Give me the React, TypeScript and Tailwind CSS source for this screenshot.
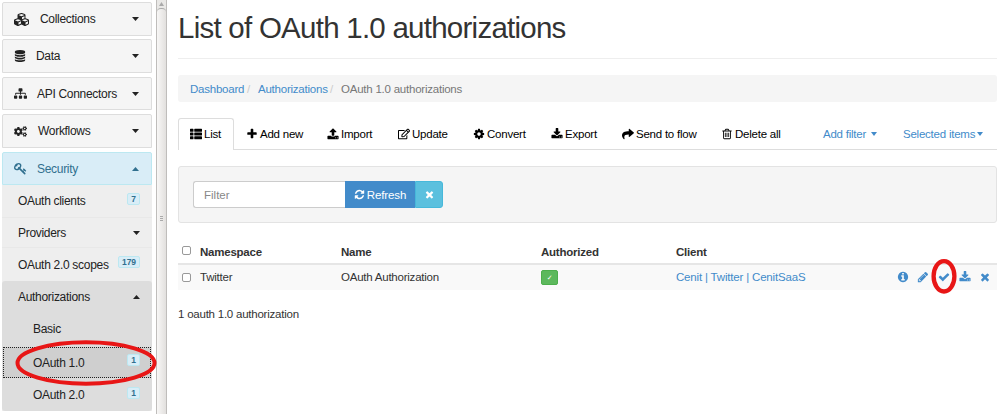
import React from "react";
import { FaCubes, FaSitemap, FaCogs, FaThList, FaRegEdit, FaShare } from "react-icons/fa";

const P = {
  database:
    "M896 768q237 0 443-43t325-127v170q0 69-103 128t-280 93.5-385 34.5-385-34.5-280-93.5-103-128v-170q119 84 325 127t443 43zm0 768q237 0 443-43t325-127v170q0 69-103 128t-280 93.5-385 34.5-385-34.5-280-93.5-103-128v-170q119 84 325 127t443 43zm0-384q237 0 443-43t325-127v170q0 69-103 128t-280 93.5-385 34.5-385-34.5-280-93.5-103-128v-170q119 84 325 127t443 43zm0-1152q208 0 385 34.5t280 93.5 103 128v128q0 69-103 128t-280 93.5-385 34.5-385-34.5-280-93.5-103-128v-128q0-69 103-128t280-93.5 385-34.5z",
  key: "M832 512q0-80-56-136t-136-56-136 56-56 136q0 42 19 83-41-19-83-19-80 0-136 56t-56 136 56 136 136 56 136-56 56-136q0-42-19-83 41 19 83 19 80 0 136-56t56-136zm851 704q0 17-49 66t-66 49q-9 0-28.5-16t-36.5-33-38.5-40-24.5-26l-96 96 220 220q28 28 28 68 0 42-39 81t-81 39q-40 0-68-28l-671-671q-176 131-365 131-163 0-265.5-102.5t-102.5-265.5q0-160 95-313t248-248 313-95q163 0 265.5 102.5t102.5 265.5q0 189-131 365l355 355 96-96q-3-3-26-24.5t-40-38.5-33-36.5-16-28.5q0-17 49-66t66-49q13 0 23 10 6 6 46 44.5t82 79.5 86.5 86 73 78 28.5 41z",
  times:
    "M1490 1322q0 40-28 68l-136 136q-28 28-68 28t-68-28l-294-294-294 294q-28 28-68 28t-68-28l-136-136q-28-28-28-68t28-68l294-294-294-294q-28-28-28-68t28-68l136-136q28-28 68-28t68 28l294 294 294-294q28-28 68-28t68 28l136 136q28 28 28 68t-28 68l-294 294 294 294q28 28 28 68z",
  check:
    "M1671 566q0 40-28 68l-724 724-136 136q-28 28-68 28t-68-28l-136-136-362-362q-28-28-28-68t28-68l136-136q28-28 68-28t68 28l294 295 656-657q28-28 68-28t68 28l136 136q28 28 28 68z",
  plus: "M1600 736v192q0 40-28 68t-68 28h-416v416q0 40-28 68t-68 28h-192q-40 0-68-28t-28-68v-416h-416q-40 0-68-28t-28-68v-192q0-40 28-68t68-28h416v-416q0-40 28-68t68-28h192q40 0 68 28t28 68v416h416q40 0 68 28t28 68z",
  refresh:
    "M1639 1056q0 5-1 7-64 268-268 434.5t-478 166.5q-146 0-282.5-55t-243.5-157l-129 129q-19 19-45 19t-45-19-19-45v-448q0-26 19-45t45-19h448q26 0 45 19t19 45-19 45l-137 137q71 66 161 102t187 36q134 0 250-65t186-179q11-17 53-117 8-23 30-23h192q13 0 22.5 9.5t9.5 22.5zm25-800v448q0 26-19 45t-45 19h-448q-26 0-45-19t-19-45 19-45l138-138q-148-137-349-137-134 0-250 65t-186 179q-11 17-53 117-8 23-30 23h-199q-13 0-22.5-9.5t-9.5-22.5v-7q65-268 270-434.5t480-166.5q146 0 284 55.5t245 156.5l130-129q19-19 45-19t45 19 19 45z",
  pencil:
    "M491 1536l91-91-235-235-91 91v107h128v128h107zm523-928q0-22-22-22-10 0-17 7l-542 542q-7 7-7 17 0 22 22 22 10 0 17-7l542-542q7-7 7-17zm-54-192l416 416-832 832h-416v-416zm683 96q0 53-37 90l-166 166-416-416 166-165q36-38 90-38 53 0 91 38l235 234q37 39 37 91z",
  info: "M1152 1376v-160q0-14-9-23t-23-9h-96v-512q0-14-9-23t-23-9h-320q-14 0-23 9t-9 23v160q0 14 9 23t23 9h96v320h-96q-14 0-23 9t-9 23v160q0 14 9 23t23 9h448q14 0 23-9t9-23zm-128-896v-160q0-14-9-23t-23-9h-192q-14 0-23 9t-9 23v160q0 14 9 23t23 9h192q14 0 23-9t9-23zm640 416q0 209-103 385.5t-279.5 279.5-385.5 103-385.5-103-279.5-279.5-103-385.5 103-385.5 279.5-279.5 385.5-103 385.5 103 279.5 279.5 103 385.5z",
  trash:
    "M704 736v576q0 14-9 23t-23 9h-64q-14 0-23-9t-9-23v-576q0-14 9-23t23-9h64q14 0 23 9t9 23zm256 0v576q0 14-9 23t-23 9h-64q-14 0-23-9t-9-23v-576q0-14 9-23t23-9h64q14 0 23 9t9 23zm256 0v576q0 14-9 23t-23 9h-64q-14 0-23-9t-9-23v-576q0-14 9-23t23-9h64q14 0 23 9t9 23zm128 724v-948h-896v948q0 22 7 40.5t14.5 27 10.5 8.5h832q3 0 10.5-8.5t14.5-27 7-40.5zm-672-1076h448l-48-117q-7-9-17-11h-317q-10 2-17 11zm928 32v64q0 14-9 23t-23 9h-96v948q0 83-47 143.5t-113 60.5h-832q-66 0-113-58.5t-47-141.5v-952h-96q-14 0-23-9t-9-23v-64q0-14 9-23t23-9h309l70-167q15-37 54-63t79-26h320q40 0 79 26t54 63l70 167h309q14 0 23 9t9 23z",
  download:
    "M1344 1344q0-26-19-45t-45-19-45 19-19 45 19 45 45 19 45-19 19-45zm256 0q0-26-19-45t-45-19-45 19-19 45 19 45 45 19 45-19 19-45zm128-224v320q0 40-28 68t-68 28h-1472q-40 0-68-28t-28-68v-320q0-40 28-68t68-28h465l135 136q58 56 136 56t136-56l136-136h464q40 0 68 28t28 68zm-325-569q17 41-14 70l-448 448q-18 19-45 19t-45-19l-448-448q-31-29-14-70 17-39 59-39h256v-448q0-26 19-45t45-19h256q26 0 45 19t19 45v448h256q42 0 59 39z",
  upload:
    "M1344 1472q0-26-19-45t-45-19-45 19-19 45 19 45 45 19 45-19 19-45zm256 0q0-26-19-45t-45-19-45 19-19 45 19 45 45 19 45-19 19-45zm128-224v320q0 40-28 68t-68 28h-1472q-40 0-68-28t-28-68v-320q0-40 28-68t68-28h427q21 56 70.5 92t110.5 36h256q61 0 110.5-36t70.5-92h427q40 0 68 28t28 68zm-325-648q-17 40-59 40h-256v448q0 26-19 45t-45 19h-256q-26 0-45-19t-19-45v-448h-256q-42 0-59-40-17-39 14-69l448-448q18-19 45-19t45 19l448 448q31 30 14 69z",
  cog: "M1152 896q0-106-75-181t-181-75-181 75-75 181 75 181 181 75 181-75 75-181zm512-109v222q0 12-8 23t-20 13l-185 28q-19 54-39 91 35 50 107 138 10 12 10 25t-9 23q-27 37-99 108t-94 71q-12 0-26-9l-138-108q-44 23-91 38-16 136-29 186-7 28-36 28h-222q-14 0-24.5-8.5t-11.5-21.5l-28-184q-49-16-90-37l-141 107q-10 9-25 9-14 0-25-11-126-114-165-168-7-10-7-23 0-12 8-23 15-21 51-66.5t54-70.5q-27-50-41-99l-183-27q-13-2-21-12.5t-8-23.5v-222q0-12 8-23t19-13l186-28q14-46 39-92-40-57-107-138-10-12-10-24 0-10 9-23 26-36 98.5-107.5t94.5-71.5q13 0 26 10l138 107q44-23 91-38 16-136 29-186 7-28 36-28h222q14 0 24.5 8.5t11.5 21.5l28 184q49 16 90 37l142-107q9-9 24-9 13 0 25 10 129 119 165 170 7 8 7 22 0 12-8 23-15 21-51 66.5t-54 70.5q26 50 41 98l183 28q13 2 21 12.5t8 23.5z",
};

function Icon({ name, className = "size-3" }: { name: keyof typeof P; className?: string }) {
  return (
    <svg viewBox="0 0 1792 1792" fill="currentColor" className={`shrink-0 ${className}`}>
      <path d={P[name]} />
    </svg>
  );
}

function Caret({ up = false, className = "w-[7px]" }: { up?: boolean; className?: string }) {
  return (
    <svg viewBox="0 0 8 4" fill="currentColor" preserveAspectRatio="none" className={`h-1 shrink-0 ${className}`}>
      <path d={up ? "M0 4L4 0L8 4Z" : "M0 0H8L4 4Z"} />
    </svg>
  );
}

function Heading({ icon, gap, label, className }: { icon: React.ReactNode; gap: string; label: string; className: string }) {
  return (
    <div className={`flex shrink-0 items-center rounded-t-[2px] border border-[#dddddd] bg-[#f5f5f5] pr-3 pl-[11px] text-[#222] ${className}`}>
      {icon}
      <span className={`flex-1 ${gap}`}>{label}</span>
      <Caret />
    </div>
  );
}

function Badge({ children }: { children: string }) {
  return (
    <span className="mb-[5px] flex h-3 items-center rounded-[2px] border border-[#bce8f1] bg-[#d9edf7] px-[3px] text-[8.5px] font-bold tracking-[-0.1px] text-[#31708f]">
      {children}
    </span>
  );
}

function Tab({ icon, label, className }: { icon: React.ReactNode; label: string; className: string }) {
  return (
    <div className={`flex shrink-0 items-center gap-[2px] text-black ${className}`}>
      {icon}
      <span>{label}</span>
    </div>
  );
}

export default function App() {
  return (
    <div className="relative flex h-[414px] w-[1000px] overflow-hidden bg-white font-['Liberation_Sans',Arial,sans-serif] text-[11.5px] leading-4 tracking-[-0.23px] whitespace-nowrap text-[#333]">
      <aside className="flex w-[152px] shrink-0 flex-col pt-[2px] pl-[2px] text-[12px] tracking-[-0.3px]">
        <Heading icon={<FaCubes className="size-[15px]" />} gap="pl-[11px]" label="Collections" className="mb-[3px] h-[34px]" />
        <Heading icon={<Icon name="database" className="size-3" />} gap="pl-[10px]" label="Data" className="mb-1 h-[34px]" />
        <Heading icon={<FaSitemap className="size-[13px]" />} gap="pl-[10px]" label="API Connectors" className="mb-1 h-[33px]" />
        <Heading icon={<FaCogs className="size-[13px]" />} gap="pl-[11px]" label="Workflows" className="mb-1 h-[34px]" />
        <div className="flex h-[33px] shrink-0 items-center rounded-t-[2px] border border-[#bce8f1] bg-[#d9edf7] pr-3 pl-[11px] text-[#31708f]">
          <Icon name="key" className="size-[13px]" />
          <span className="flex-1 pl-[10px]">Security</span>
          <Caret up />
        </div>
        <div className="flex h-[226px] shrink-0 flex-col bg-[#eeeeee] text-[#222]">
          <div className="flex h-[33px] shrink-0 items-center justify-between border-b border-[#e8e8e8] pr-3 pl-4">
            <span>OAuth clients</span>
            <Badge>7</Badge>
          </div>
          <div className="flex h-[30px] shrink-0 items-center justify-between border-b border-[#e8e8e8] pr-3 pl-4">
            <span>Providers</span>
            <Caret />
          </div>
          <div className="flex h-[33px] shrink-0 items-center justify-between pr-3 pl-4">
            <span>OAuth 2.0 scopes</span>
            <Badge>179</Badge>
          </div>
          <div className="flex h-[130px] shrink-0 flex-col rounded-[3px] bg-[#dddddd]">
            <div className="flex h-8 shrink-0 items-center justify-between pr-3 pl-4">
              <span>Authorizations</span>
              <Caret up />
            </div>
            <div className="flex h-[34px] shrink-0 items-center pb-[2px] pl-[31px]">Basic</div>
            <div className="mx-px flex h-[31px] shrink-0 items-center justify-between border border-dotted border-[#222] bg-[#cfcfcf] pr-[10px] pl-[29px]">
              <span>OAuth 1.0</span>
              <Badge>1</Badge>
            </div>
            <div className="flex h-[33px] shrink-0 items-center justify-between pt-px pr-3 pl-[31px]">
              <span>OAuth 2.0</span>
              <Badge>1</Badge>
            </div>
          </div>
        </div>
      </aside>

      <div className="ml-1 flex w-[11px] shrink-0 flex-col border-x border-[#bfbdbb] bg-[#e9e8e6]">
        <div className="flex h-2 items-center justify-center text-[#aaa]">
          <Caret up className="w-[5px]" />
        </div>
        <div className="flex flex-1 flex-col items-center justify-center gap-px rounded-t-[4px] border-t border-[#aaa] bg-linear-to-r from-[#f8f7f6] to-[#e2e0de] pt-[14px]">
          <i className="h-px w-[3px] bg-[#aaa]" />
          <i className="h-px w-[3px] bg-[#aaa]" />
          <i className="h-px w-[3px] bg-[#aaa]" />
        </div>
      </div>

      <main className="ml-[11px] flex w-[819px] shrink-0 flex-col">
        <h1 className="flex h-[59px] shrink-0 items-center border-b border-[#eeeeee] pb-[2px] text-[29.5px] tracking-[-0.75px] text-[#333]">List of OAuth 1.0 authorizations</h1>
        <nav className="mt-4 flex h-[27px] shrink-0 items-center rounded-[3px] bg-[#f5f5f5] pl-3 text-[#777]">
          <a className="w-[57px] text-[#428bca]">Dashboard</a>
          <span className="w-[11px] text-[#ccc]">/</span>
          <a className="w-[72px] text-[#428bca]">Authorizations</a>
          <span className="w-[11px] text-[#ccc]">/</span>
          <span>OAuth 1.0 authorizations</span>
        </nav>
        <div className="mt-4 flex h-8 shrink-0 border-b border-[#dddddd]">
          <Tab icon={<FaThList className="size-3" />} label="List" className="-mb-px w-14 rounded-t-[3px] border border-b-0 border-[#dddddd] bg-white pb-px pl-[11px]" />
          <Tab icon={<Icon name="plus" />} label="Add new" className="w-[81px] pl-3" />
          <Tab icon={<Icon name="upload" />} label="Import" className="w-[71px] pl-3" />
          <Tab icon={<FaRegEdit className="size-3" />} label="Update" className="w-[75px] pl-3" />
          <Tab icon={<Icon name="cog" />} label="Convert" className="w-[78px] pl-3" />
          <Tab icon={<Icon name="download" />} label="Export" className="w-[71px] pl-3" />
          <Tab icon={<FaShare className="size-3" />} label="Send to flow" className="w-[100px] pl-3" />
          <Tab icon={<Icon name="trash" />} label="Delete all" className="w-[113px] pl-[11px]" />
          <a className="flex w-20 items-center gap-[5px] text-[#428bca]">
            Add filter <Caret className="w-[6px]" />
          </a>
          <a className="flex items-center gap-[2px] text-[#428bca]">
            Selected items <Caret className="w-[6px]" />
          </a>
        </div>
        <section className="mt-4 flex h-[57px] shrink-0 items-center rounded-[3px] border border-[#e3e3e3] bg-[#f5f5f5] pl-[14px]">
          <div className="flex h-[27px] w-[152px] items-center rounded-l-[3px] border border-r-0 border-[#cccccc] bg-white pl-[10px] tracking-normal text-[#888]">Filter</div>
          <button className="flex h-[27px] w-[70px] items-center justify-center gap-[2px] bg-[#428bca] text-white">
            <Icon name="refresh" className="size-[11px]" />
            <span className="tracking-[-0.1px]">Refresh</span>
          </button>
          <button className="flex h-[27px] w-7 items-center justify-center rounded-r-[3px] border border-[#46b8da] bg-[#5bc0de] text-white">
            <Icon name="times" className="size-[11px]" />
          </button>
        </section>
        <div className="mt-4 flex h-[26px] shrink-0 items-center border-b-2 border-[#e6e6e6] pt-[2px] pl-1 font-bold">
          <span className="mb-[4px] size-[9px] rounded-[2px] border border-[#999] bg-white" />
          <span className="ml-[9px] w-[141px]">Namespace</span>
          <span className="w-[200px]">Name</span>
          <span className="w-[135px]">Authorized</span>
          <span>Client</span>
        </div>
        <div className="flex h-[25px] shrink-0 items-center bg-[#f9f9f9] pb-[2px] pl-1">
          <span className="mt-[2px] size-[9px] rounded-[2px] border border-[#999] bg-white" />
          <span className="ml-[9px] w-[141px]">Twitter</span>
          <span className="w-[200px]">OAuth Authorization</span>
          <span className="w-[135px]">
            <span className="mt-[2px] flex h-[15px] w-[17px] items-center justify-center rounded-[2px] border border-[#4cae4c] bg-[#5cb85c] font-['DejaVu_Sans',sans-serif] text-[7px] text-white">✓</span>
          </span>
          <a className="w-[221px] tracking-[-0.18px] text-[#428bca]">Cenit | Twitter | CenitSaaS</a>
          <div className="flex items-center text-[#428bca]">
            <Icon name="info" className="mr-2 size-3" />
            <Icon name="pencil" className="mr-[9px] size-3" />
            <Icon name="check" className="mr-[9px] size-3" />
            <Icon name="download" className="mr-2 size-3" />
            <Icon name="times" />
          </div>
        </div>
        <p className="mt-4">1 oauth 1.0 authorization</p>
      </main>

      <svg viewBox="0 0 1000 414" fill="none" stroke="#e81616" className="pointer-events-none absolute inset-0 h-[414px] w-[1000px]">
        <ellipse cx="86" cy="363" rx="68.5" ry="20.7" strokeWidth="4" />
        <ellipse cx="944" cy="276.3" rx="10.4" ry="15.2" strokeWidth="4.3" />
      </svg>
    </div>
  );
}
